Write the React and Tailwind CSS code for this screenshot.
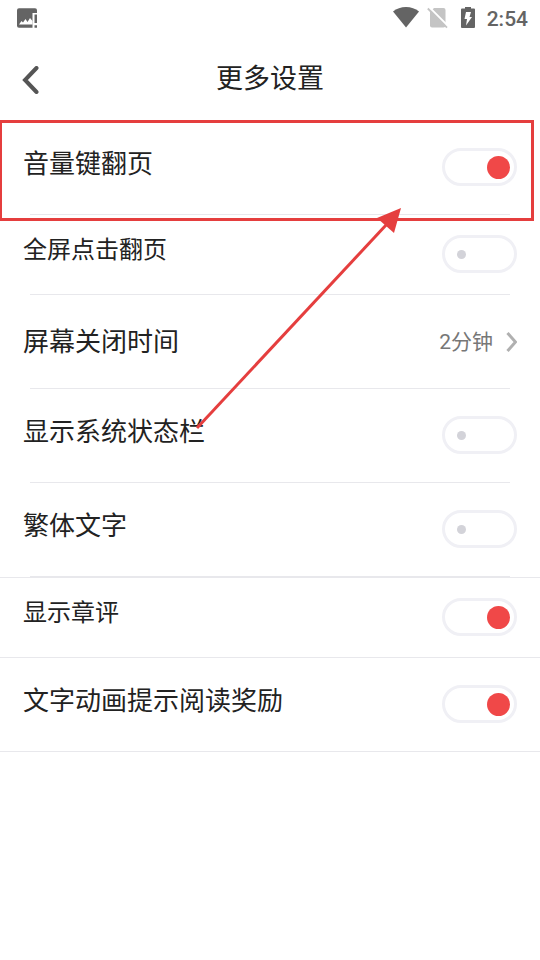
import { useState } from 'react';

const rows = [
  { id: 'volume', label: '音量键翻页', type: 'switch', on: true, highlighted: true },
  { id: 'tap', label: '全屏点击翻页', type: 'switch', on: false, compact: true },
  { id: 'screen-off', label: '屏幕关闭时间', type: 'link', value: '2分钟' },
  { id: 'status-bar', label: '显示系统状态栏', type: 'switch', on: false },
  { id: 'traditional', label: '繁体文字', type: 'switch', on: false },
];

const extraRows = [
  { id: 'comments', label: '显示章评', type: 'switch', on: true, compact: true },
  { id: 'reward', label: '文字动画提示阅读奖励', type: 'switch', on: true },
];

function StatusBar() {
  return (
    <div className="flex h-9 items-center justify-between pr-3 pl-4 text-[#646464]">
      <svg width="22" height="22" viewBox="0 0 22 22" fill="none" aria-hidden="true">
        <rect x="1" y="1.200" width="20" height="19.600" rx="2" fill="currentColor" />
        <path fill="#fff" d="M3 17.500 5.500 14l1.500 1.500L9.500 12l2 3L14 11l2.500 3v3.500Z" />
        <path fill="#fff" d="M16.500 6H22v16h-5.500Z" />
        <path fill="currentColor" d="M18.500 7.500H21v8.500h-2.500zM18.500 18.300H21v2.500h-2.500z" />
      </svg>
      <div className="flex items-center">
        <svg width="26" height="22" viewBox="0 0 26 22" aria-hidden="true">
          <path fill="currentColor" d="M0 4.600C3.600 1.600 8 0 13 0s9.400 1.600 13 4.600L13 20.500Z" />
        </svg>
        <svg className="ml-2" width="22" height="22" viewBox="0 0 22 22" aria-hidden="true">
          <path fill="#c4c4c4" d="M7 1h9.500a2 2 0 0 1 2 2v15.500a2 2 0 0 1-2 2H5a2 2 0 0 1-2-2V5Z" />
          <path stroke="#fff" strokeWidth="2" d="M2 0 21 19" />
          <path stroke="#c4c4c4" strokeWidth="1.800" d="M.8 1.500 20 20.700" />
        </svg>
        <svg className="ml-3" width="14" height="22" viewBox="0 0 14 22" aria-hidden="true">
          <path fill="currentColor" d="M4 0h6v1.500h3a1 1 0 0 1 1 1V20a1 1 0 0 1-1 1H1a1 1 0 0 1-1-1V2.500a1 1 0 0 1 1-1h3Z" />
          <path fill="#fff" d="M5 5h5l-1.500 5H11L5 18.500l1-6.500H3.500Z" />
        </svg>
        <span className="ml-3 pt-0.5 text-[21px] leading-6 font-medium">2:54</span>
      </div>
    </div>
  );
}

function Header() {
  return (
    <header className="grid h-[85px] grid-cols-[1fr_auto_1fr] items-center px-[22px] pt-0.5">
      <button type="button" aria-label="返回" className="w-4 text-[#555]">
        <svg width="18" height="28" viewBox="0 0 18 28" fill="none" aria-hidden="true">
          <path d="M14.500 2 3 14l11.500 12" stroke="currentColor" strokeWidth="4" strokeLinecap="round" />
        </svg>
      </button>
      <h1 className="pb-0.5 text-[27px] leading-10 text-[#222]">更多设置</h1>
    </header>
  );
}

function Switch({ id, defaultOn }) {
  const [on, setOn] = useState(defaultOn);
  return (
    <input
      id={id}
      type="checkbox"
      role="switch"
      checked={on}
      onChange={(e) => setOn(e.target.checked)}
      className="flex h-[38px] w-[75px] shrink-0 cursor-pointer appearance-none items-center rounded-full border-3 border-[#f0f0f5] bg-white pr-1 pl-3 before:size-[9px] before:rounded-full before:bg-[#d3d3d9] checked:justify-end checked:before:size-[23px] checked:before:bg-[#f04848]"
    />
  );
}

// Red frame and arrow that point the reader at one setting.
function Callout() {
  return (
    <div className="pointer-events-none absolute -top-px right-[6px] -left-px h-[101px] border-3 border-[#e53e3e]">
      <svg
        className="absolute top-[85px] left-[193px]"
        width="210"
        height="222"
        viewBox="0 0 210 222"
        fill="none"
        aria-hidden="true"
      >
        <path d="M2 220 192 16" stroke="#e53e3e" strokeWidth="3" />
        <path d="M206 0 182 10l17 15Z" fill="#e53e3e" />
      </svg>
    </div>
  );
}

function Row({ row, full }) {
  const size = row.compact ? 'h-20 text-2xl' : 'h-[94px] text-[26px]';
  return (
    <li className={`relative ${row.highlighted ? 'z-10' : ''}`}>
      <div className={`flex items-center justify-between px-[23px] ${size}`}>
        {row.type === 'switch' ? (
          <div className="flex flex-1 items-center justify-between pb-0.5">
            <label htmlFor={row.id} className={`leading-10 ${row.compact ? 'pb-2' : 'pb-1.5'}`}>
              {row.label}
            </label>
            <Switch id={row.id} defaultOn={row.on} />
          </div>
        ) : (
          <a href={`#${row.id}`} className="flex flex-1 items-center justify-between">
            <span className="leading-10">{row.label}</span>
            <span className="flex items-center gap-3 text-[21px] leading-8 text-[#777]">
              {row.value}
              <svg width="12" height="20" viewBox="0 0 12 20" fill="none" aria-hidden="true">
                <path d="m2.500 1 8 9-8 9" stroke="#b0b0b0" strokeWidth="3" />
              </svg>
            </span>
          </a>
        )}
      </div>
      <div className={`-mt-px h-px bg-[#e8e8ec] ${full ? '' : 'mx-[30px]'}`} />
      {row.highlighted && <Callout />}
    </li>
  );
}

export default function App() {
  return (
    <div className="min-h-screen overflow-x-hidden bg-white font-[Roboto,'Noto_Sans_CJK_SC',sans-serif] text-[#222]">
      <StatusBar />
      <Header />
      <main>
        <ul>
          {rows.map((row) => (
            <Row key={row.id} row={row} />
          ))}
        </ul>
        <ul className="border-t border-[#e8e8ec]">
          {extraRows.map((row) => (
            <Row key={row.id} row={row} full />
          ))}
        </ul>
      </main>
    </div>
  );
}
